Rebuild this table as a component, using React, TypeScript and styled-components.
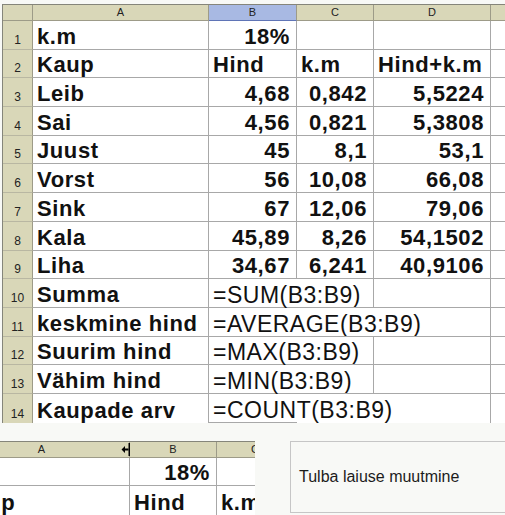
import React from "react";
import styled, { createGlobalStyle } from "styled-components";

const Global = createGlobalStyle`
  html, body { margin: 0; padding: 0; background: #f8f9f6; overflow: hidden; }
  body { font-family: "Liberation Sans", Arial, sans-serif; }
`;

const Page = styled.div`
  width: 505px;
  height: 515px;
  display: flex;
  flex-direction: column;
  overflow: hidden;
`;

const SheetArea = styled.div`
  padding: 4px 0 0 2px;
`;

const Sheet = styled.div`
  display: grid;
  grid-template-columns: 30px 176px 88px 77px 117px 15px;
  grid-template-rows: 16px repeat(14, 28.7px);
  border-left: 1px solid #85857a;
  border-top: 1px solid #85857a;
  background: #fff;
  width: max-content;
`;

const HeadCell = styled.div<{ $active?: boolean; $noRight?: boolean }>`
  box-sizing: border-box;
  position: relative;
  background: ${(p) => (p.$active ? "#a8b9e3" : "#d9d7b8")};
  border-right: ${(p) => (p.$noRight ? "none" : "1px solid #9d9b88")};
  border-bottom: 1px solid ${(p) => (p.$active ? "#5f74b6" : "#9d9b88")};
  font-size: 11px;
  color: #222;
  display: flex;
  align-items: center;
  justify-content: center;
  line-height: 1;
`;

const RowNum = styled.div<{ $last?: boolean }>`
  box-sizing: border-box;
  background: #d9d7b8;
  border-right: 1px solid #9d9b88;
  border-bottom: ${(p) => (p.$last ? "none" : "1px solid #b9b7a2")};
  font-size: 12px;
  color: #222;
  line-height: 12px;
  display: flex;
  align-items: flex-end;
  justify-content: center;
  padding-bottom: 3px;
`;

const Cell = styled.div<{
  $right?: boolean;
  $formula?: boolean;
  $noRight?: boolean;
  $noBottom?: boolean;
  $light?: boolean;
}>`
  box-sizing: border-box;
  min-width: 0;
  border-right: ${(p) => (p.$noRight ? "none" : "1px solid #a8a8a8")};
  border-bottom: ${(p) => (p.$noBottom ? "none" : "1px solid #a8a8a8")};
  display: flex;
  align-items: flex-end;
  justify-content: ${(p) => (p.$right ? "flex-end" : "flex-start")};
  padding: 0 6px 1px 4px;
  font-size: ${(p) => (p.$formula ? "23px" : "22px")};
  font-weight: ${(p) => (p.$formula ? "normal" : "bold")};
  letter-spacing: ${(p) => (p.$formula ? "0.5px" : "0.6px")};
  line-height: 22px;
  white-space: nowrap;
  color: #111;
  overflow: visible;
`;

const LowerRow = styled.div`
  margin-top: auto;
  height: 74px;
  display: flex;
`;

const ImageCell = styled.div`
  width: 290px;
  flex: none;
`;

const MiniClip = styled.div`
  width: 255px;
  height: 74px;
  overflow: hidden;
`;

const MiniSheet = styled.div`
  margin-left: -46px;
  display: grid;
  grid-template-columns: 176px 87px 77px;
  grid-template-rows: 16px 28px 29px;
  border-top: 1px solid #85857a;
  background: #fff;
  width: max-content;
`;

const CaptionCell = styled.div`
  flex: 1;
  height: 72px;
  box-sizing: border-box;
  border-top: 1px solid #c6c6c6;
  border-bottom: 1px solid #c6c6c6;
  border-left: 1px solid #c6c6c6;
  display: flex;
  align-items: center;
  padding-left: 8px;
  font-size: 16px;
  color: #1c1c1c;
`;

const ResizeCursor = styled.svg`
  position: absolute;
  right: -9px;
  top: 1px;
`;

type Row = {
  a: string;
  b: string;
  c: string;
  d: string;
  bRight?: boolean;
  formula?: boolean;
  bNoRight?: boolean;
  cNoRight?: boolean;
  cRight?: boolean;
  dRight?: boolean;
};

const rows: Row[] = [
  { a: "k.m", b: "18%", c: "", d: "", bRight: true },
  { a: "Kaup", b: "Hind", c: "k.m", d: "Hind+k.m" },
  { a: "Leib", b: "4,68", c: "0,842", d: "5,5224", bRight: true, cRight: true, dRight: true },
  { a: "Sai", b: "4,56", c: "0,821", d: "5,3808", bRight: true, cRight: true, dRight: true },
  { a: "Juust", b: "45", c: "8,1", d: "53,1", bRight: true, cRight: true, dRight: true },
  { a: "Vorst", b: "56", c: "10,08", d: "66,08", bRight: true, cRight: true, dRight: true },
  { a: "Sink", b: "67", c: "12,06", d: "79,06", bRight: true, cRight: true, dRight: true },
  { a: "Kala", b: "45,89", c: "8,26", d: "54,1502", bRight: true, cRight: true, dRight: true },
  { a: "Liha", b: "34,67", c: "6,241", d: "40,9106", bRight: true, cRight: true, dRight: true },
  { a: "Summa", b: "=SUM(B3:B9)", c: "", d: "", formula: true, bNoRight: true },
  { a: "keskmine hind", b: "=AVERAGE(B3:B9)", c: "", d: "", formula: true, bNoRight: true, cNoRight: true },
  { a: "Suurim hind", b: "=MAX(B3:B9)", c: "", d: "", formula: true, bNoRight: true },
  { a: "Vähim hind", b: "=MIN(B3:B9)", c: "", d: "", formula: true, bNoRight: true },
  { a: "Kaupade arv", b: "=COUNT(B3:B9)", c: "", d: "", formula: true, bNoRight: true, cNoRight: true },
];

export default function App() {
  return (
    <Page>
      <Global />
      <SheetArea>
        <Sheet>
          <HeadCell />
          <HeadCell>A</HeadCell>
          <HeadCell $active>B</HeadCell>
          <HeadCell>C</HeadCell>
          <HeadCell>D</HeadCell>
          <HeadCell $noRight />
          {rows.map((r, i) => {
            const last = i === rows.length - 1;
            return (
              <React.Fragment key={i}>
                <RowNum $last={last}>{i + 1}</RowNum>
                <Cell $noBottom={last}>{r.a}</Cell>
                <Cell $right={r.bRight} $formula={r.formula} $noRight={r.bNoRight}>
                  {r.b}
                </Cell>
                <Cell $right={r.cRight} $noRight={r.cNoRight} $noBottom={last}>
                  {r.c}
                </Cell>
                <Cell $right={r.dRight} $noBottom={last}>
                  {r.d}
                </Cell>
                <Cell $noRight $noBottom={last} />
              </React.Fragment>
            );
          })}
        </Sheet>
      </SheetArea>
      <LowerRow>
        <ImageCell>
          <MiniClip>
            <MiniSheet>
              <HeadCell>
                A
                <ResizeCursor width="17" height="13" viewBox="0 0 17 13">
                  <rect x="7.5" y="0" width="2" height="13" fill="#000" />
                  <path d="M0.5 6.5 L4 3 V5.5 H7.5 V7.5 H4 V10 Z" fill="#000" />
                  <path d="M16.5 6.5 L13 3 V5.5 H9.5 V7.5 H13 V10 Z" fill="#000" />
                </ResizeCursor>
              </HeadCell>
              <HeadCell>B</HeadCell>
              <HeadCell>C</HeadCell>
              <Cell />
              <Cell $right>18%</Cell>
              <Cell />
              <Cell $noBottom>Kaup</Cell>
              <Cell $noBottom>Hind</Cell>
              <Cell $noBottom>k.m</Cell>
            </MiniSheet>
          </MiniClip>
        </ImageCell>
        <CaptionCell>Tulba laiuse muutmine</CaptionCell>
      </LowerRow>
    </Page>
  );
}
